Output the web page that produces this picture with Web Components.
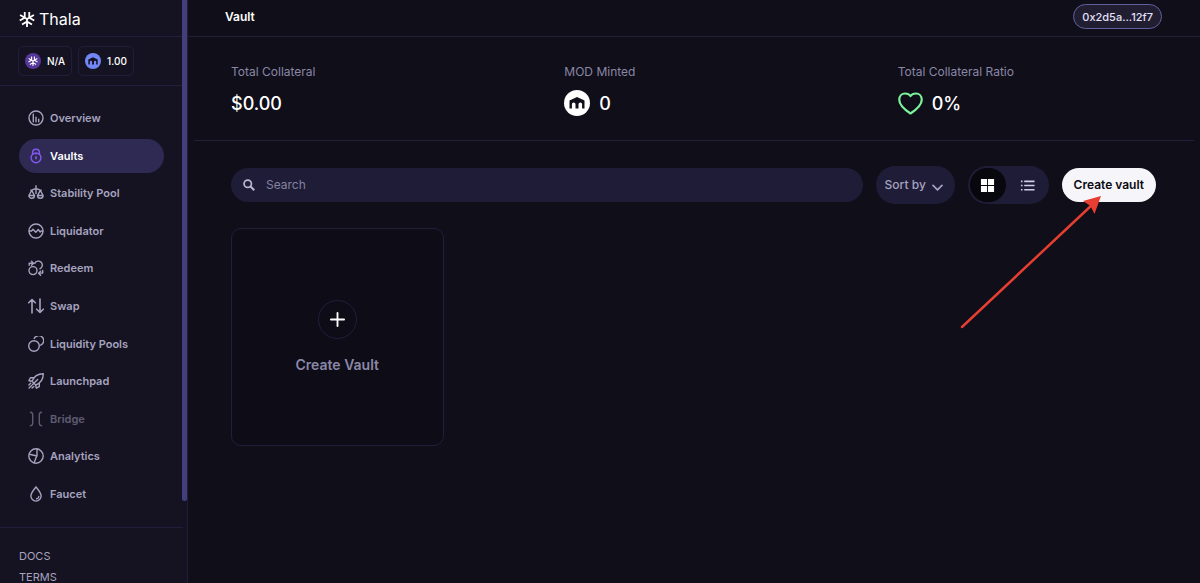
<!DOCTYPE html>
<html lang="en">
<head>
<meta charset="utf-8">
<meta name="viewport" content="width=device-width, initial-scale=1">
<title>Thala – Vault</title>
<style>
  :root {
    --bg: #0f0e19;
    --side: #151322;
    --line: #211e3c;
    --field: #1f1c38;
    --pill: #2e2a54;
    --thumb: #433f7a;
    --muted: #a6a3bf;
    --dim: #8a87a6;
  }
  body {
    margin: 0;
    background: var(--bg);
    color: #fff;
    font: 12px/16px Inter, "Liberation Sans", sans-serif;
  }
</style>
</head>
<body>
<th-app></th-app>

<script>
const FLAKE_ARM = '<path d="M8 8v8M8 10.600l-5 2.900M8 10.600l5 2.900"/>';
const ICONS = {
  logo: `<g stroke-width="1.800" stroke-linecap="butt">${FLAKE_ARM}<g transform="rotate(120 8 8)">${FLAKE_ARM}</g><g transform="rotate(240 8 8)">${FLAKE_ARM}</g></g>`,
  mod: '<path d="M.5 13.500V5.600L8 2l7.500 3.600v7.900h-2.400V9.300A1.800 1.800 0 0 0 11.300 7.500 1.800 1.800 0 0 0 9.500 9.300v4.200h-3V9.300A1.800 1.800 0 0 0 4.700 7.500 1.800 1.800 0 0 0 2.900 9.300v4.200z" fill="currentColor" stroke="none"/>',
  overview: '<circle cx="8" cy="8" r="7"/><path d="M5.300 4.300v7.500M8 7.300v4.500M10.700 9.300v2.500"/>',
  vaults: '<circle cx="8" cy="9.800" r="4.900"/><path d="M4.600 6.300V4.600a3.400 3.400 0 0 1 6.800 0v1.700M5.800 5.600h4.400"/><path d="M8 8.900v1.900" stroke-width="1.600"/>',
  stability: '<path d="M8 .8v3M2.800 5.300C4.500 5.300 5.500 3.800 8 3.800s3.500 1.500 5.200 1.500M3.700 5.300L.9 10.500h5.600zM12.300 5.300L9.500 10.500h5.600zM.9 10.500a2.800 2.800 0 0 0 5.600 0M9.500 10.500a2.800 2.800 0 0 0 5.600 0M8 4v4.500"/>',
  liquidator: '<circle cx="8" cy="8" r="7"/><path d="M1.200 8h2.300l1.500-1.800 2.800 3 1.200-1.200 1.200-1.500 2 2.500 1-1h1.600"/>',
  redeem: '<circle cx="5" cy="10.600" r="4"/><path d="M6.700 3.400a4 4 0 1 1 5.200 5.400M1.200 5.300V3.200h4M3.500 1.200l2 2-2 2M14.700 10.500v2.600h-3.700M12.600 11.200l-2 2 2 2"/>',
  swap: '<path d="M4 15V1.600M.7 4.800L4 1.500l3.300 3.300M12 1v13.400M8.700 11.200l3.300 3.300 3.300-3.300" stroke-width="1.600"/>',
  pools: '<circle cx="6" cy="10" r="5.300"/><path d="M6.200 2.400a5 5 0 1 1 6.500 6.800"/>',
  launchpad: '<path d="M4 8.300C5.800 3.700 9.800.8 15.300.8c0 5.400-2.800 9.400-7.600 11.200zM6.500 4.600L2.400 4.700.9 7.700l3 .6M11.400 9.500l-.1 4.100-3 1.600-.6-3.200M4.600 11.400L9.600 6.400M2.600 10.200L.9 11.900M5.800 13.400l-1.700 1.700M3.600 12.400l-2.500 2.500"/>',
  bridge: '<path d="M2.500 1.300C4.200 1.500 4.700 2.500 4.700 4v8c0 1.500-.5 2.500-2.200 2.700M13.500 1.300C11.800 1.500 11.300 2.500 11.300 4v8c0 1.500.5 2.500 2.200 2.700"/>',
  analytics: '<circle cx="8" cy="8" r="7.200"/><path d="M9 .9v6.400L6 14.900M9 8L1.500 6.200"/>',
  faucet: '<path d="M8 .9C6 3.800 2.900 6.700 2.900 10a5.100 5.100 0 0 0 10.200 0C13.100 6.700 10 3.800 8 .9z"/><path d="M8.600 12.800a2.700 2.700 0 0 0 2.200-2.300"/>',
  search: '<circle cx="6.300" cy="6.300" r="4.900" stroke-width="2.300"/><path d="M9.800 9.800l5.200 5.200" stroke-width="2.800" stroke-linecap="butt"/>',
  chevron: '<path d="M1.500 5l6.500 6.500L14.500 5" stroke-width="2.400"/>',
  grid: '<path d="M1 1h6.500v6.500H1zM8.500 1H15v6.500H8.500zM1 8.500h6.500V15H1zM8.500 8.500H15V15H8.500z" fill="currentColor" stroke="none"/>',
  list: '<path d="M1 3.500h1.700M1 8h1.700M1 12.500h1.700M4.500 3.500H15.500M4.500 8H15.500M4.500 12.500H15.500" stroke-width="1.800" stroke-linecap="butt"/>',
  plus: '<path d="M8 1v14M1 8h14" stroke-width="2"/>',
  heart: '<path d="M8 14.400C4.500 12.100.8 9.300.8 5.600.8 3.200 2.500 1.600 4.500 1.600 6 1.600 7.300 2.100 8 3.200 8.700 2.100 10 1.600 11.500 1.600c2 0 3.700 1.600 3.700 4 0 3.700-3.700 6.500-7.200 8.800z" stroke-width="1.400"/>'
};

function define(name, html, setup) {
  const template = document.createElement('template');
  template.innerHTML = html;
  customElements.define(name, class extends HTMLElement {
    constructor() {
      super();
      this.attachShadow({ mode: 'open' }).append(template.content.cloneNode(true));
    }
    connectedCallback() {
      if (setup) setup(this, this.shadowRoot);
    }
  });
}

define('th-icon', `
  <style>
    :host { display: block; flex: none; width: 16px; height: 16px; }
    svg { display: block; width: 100%; height: 100%; }
  </style>
  <svg viewBox="0 0 16 16" fill="none" stroke="currentColor" stroke-width="1.400" stroke-linecap="round" stroke-linejoin="round" aria-hidden="true"></svg>
`, (host, root) => { root.querySelector('svg').innerHTML = ICONS[host.getAttribute('name')]; });

define('th-price', `
  <style>
    :host {
      display: flex; align-items: center; gap: 6px; box-sizing: border-box;
      height: 30px; padding: 0 6px; border: 1px solid var(--line); border-radius: 5px;
      font-size: 10px; font-weight: 500;
    }
    .coin { display: grid; place-items: center; width: 16px; height: 16px; border-radius: 50%; background: var(--coin); color: var(--glyph, #fff); }
    th-icon { width: 10px; height: 10px; }
  </style>
  <span class="coin"></span><slot></slot>
`, (host, root) => { root.querySelector('.coin').innerHTML = `<th-icon name="${host.getAttribute('icon')}"></th-icon>`; });

define('th-nav-item', `
  <style>
    :host { display: block; }
    a {
      display: flex; align-items: center; gap: 6px; height: 34px; padding: 0 9px;
      border-radius: 17px; color: var(--muted); font-size: 11px; font-weight: 600; text-decoration: none;
    }
    :host([active]) a { background: var(--pill); color: #fff; }
    :host([active]) .icon { color: #8358ee; }
    :host([disabled]) a { opacity: .5; }
  </style>
  <a href="#"><span class="icon"></span><slot></slot></a>
`, (host, root) => { root.querySelector('.icon').innerHTML = `<th-icon name="${host.getAttribute('icon')}"></th-icon>`; });

define('th-sidebar', `
  <style>
    :host { display: block; position: relative; overflow: hidden; box-sizing: border-box; height: 100vh; padding-right: 4px; background: var(--side); border-right: 1px solid var(--line); }
    .brand { display: flex; align-items: center; gap: 4px; box-sizing: border-box; height: 37px; padding: 2px 19px 0; border-bottom: 1px solid var(--line); color: #fff; text-decoration: none; font-size: 16px; line-height: 20px; }
    .prices { display: flex; gap: 6px; padding: 9px 18px; border-bottom: 1px solid var(--line); }
    nav { padding: 15px 19px 16px; border-bottom: 1px solid var(--line); }
    .items { display: flex; flex-direction: column; justify-content: space-between; height: 410px; }
    .links { display: flex; flex-direction: column; gap: 9px; padding: 22px 19px; }
    .links a { color: var(--muted); font-size: 11px; line-height: 12px; text-decoration: none; }
    .thumb { position: absolute; top: 0; right: 0; width: 5px; height: 86%; background: var(--thumb); border-radius: 0 0 3px 3px; }
  </style>
  <a class="brand" href="#"><th-icon name="logo"></th-icon>Thala</a>
  <div class="prices">
    <th-price icon="logo" style="--coin:#56389a">N/A</th-price>
    <th-price icon="mod" style="--coin:#7187f5;--glyph:#151322">1.00</th-price>
  </div>
  <nav aria-label="Main"><div class="items">
    <th-nav-item icon="overview">Overview</th-nav-item>
    <th-nav-item icon="vaults" active>Vaults</th-nav-item>
    <th-nav-item icon="stability">Stability Pool</th-nav-item>
    <th-nav-item icon="liquidator">Liquidator</th-nav-item>
    <th-nav-item icon="redeem">Redeem</th-nav-item>
    <th-nav-item icon="swap">Swap</th-nav-item>
    <th-nav-item icon="pools">Liquidity Pools</th-nav-item>
    <th-nav-item icon="launchpad">Launchpad</th-nav-item>
    <th-nav-item icon="bridge" disabled>Bridge</th-nav-item>
    <th-nav-item icon="analytics">Analytics</th-nav-item>
    <th-nav-item icon="faucet">Faucet</th-nav-item>
  </div></nav>
  <div class="links"><a href="#">DOCS</a><a href="#">TERMS</a></div>
  <div class="thumb"></div>
`);

define('th-header', `
  <style>
    :host { display: flex; align-items: center; justify-content: space-between; box-sizing: border-box; height: 37px; padding: 0 38px 3px 37px; border-bottom: 1px solid var(--line); }
    h1 { margin: 0; font-size: 12px; font-weight: 600; }
    button { height: 25px; padding: 0 8px; border: 1px solid #5f60a0; border-radius: 13px; background: #201e30; color: #e4e0fc; font: 500 11px/16px Inter, sans-serif; }
  </style>
  <h1>Vault</h1>
  <button type="button">0x2d5a...12f7</button>
`);

define('th-stat', `
  <style>
    :host { display: block; padding: 27px 0 24px 37px; }
    .label { color: var(--dim); font-size: 12px; line-height: 16px; }
    .value { display: flex; align-items: center; gap: 9px; height: 26px; margin-top: 10px; font-size: 18px; line-height: 26px; font-weight: 500; }
    .value span { padding-top: 2px; }
  </style>
  <div class="label"><slot name="label"></slot></div>
  <div class="value"><slot name="icon"></slot><span><slot></slot></span></div>
`);

define('th-stats', `
  <style>
    :host { display: grid; grid-template-columns: repeat(3, 1fr); margin: 0 6px; border-bottom: 1px solid var(--line); }
    .coin { display: grid; place-items: center; width: 26px; height: 26px; border-radius: 50%; background: #fff; color: #0f0e19; }
    .heart { width: 25px; height: 25px; color: #7bf29b; }
  </style>
  <th-stat><span slot="label">Total Collateral</span>$0.00</th-stat>
  <th-stat><span slot="label">MOD Minted</span><span slot="icon" class="coin"><th-icon name="mod"></th-icon></span>0</th-stat>
  <th-stat><span slot="label">Total Collateral Ratio</span><th-icon slot="icon" class="heart" name="heart"></th-icon>0%</th-stat>
`);

define('th-toolbar', `
  <style>
    :host { display: flex; align-items: center; gap: 13px; }
    .search { display: flex; align-items: center; flex: 1; gap: 11px; height: 34px; padding: 0 12px; border-radius: 17px; background: var(--field); color: #b9b7cf; }
    .search th-icon { width: 12px; height: 12px; }
    input { flex: 1; min-width: 0; padding: 0; border: 0; outline: 0; background: none; color: #fff; font: 12px/16px Inter, sans-serif; }
    input::placeholder { color: #85829f; opacity: 1; }
    .sort { display: grid; align-items: center; border-radius: 19px; background: var(--field); color: var(--muted); }
    .sort > * { grid-area: 1 / 1; }
    .sort th-icon { justify-self: end; width: 11px; height: 11px; margin: 4px 12px 0 0; pointer-events: none; }
    select { appearance: none; width: 79px; height: 38px; padding: 0 26px 0 9px; border: 0; background: none; color: inherit; font: 500 12px/16px Inter, sans-serif; }
    .views { display: flex; align-items: center; gap: 4px; box-sizing: border-box; width: 81px; height: 38px; padding: 0 2px; border-radius: 19px; background: var(--field); }
    .views button { display: grid; place-items: center; width: 36px; height: 34px; padding: 0; border: 0; border-radius: 18px; background: none; color: #d0cde6; }
    .views .on { background: #08070d; color: #fff; }
    .views th-icon { width: 15px; height: 15px; }
    .create { height: 34px; padding: 0 12px; border: 0; border-radius: 17px; background: #f6f5fa; color: #0a0a12; font: 600 12px/16px Inter, sans-serif; }
  </style>
  <label class="search"><th-icon name="search"></th-icon><input type="text" placeholder="Search" aria-label="Search"></label>
  <div class="sort"><select aria-label="Sort by"><option>Sort by</option></select><th-icon name="chevron"></th-icon></div>
  <div class="views">
    <button type="button" class="on" aria-label="Grid view"><th-icon name="grid"></th-icon></button>
    <button type="button" aria-label="List view"><th-icon name="list"></th-icon></button>
  </div>
  <button type="button" class="create">Create vault</button>
`);

define('th-vault-grid', `
  <style>
    :host { display: grid; grid-template-columns: repeat(4, 1fr); gap: 25px; }
    button { display: flex; flex-direction: column; align-items: center; justify-content: center; gap: 16px; height: 218px; padding: 0; border: 1px solid var(--line); border-radius: 10px; background: #0d0c17; color: var(--dim); font: 600 14px/20px Inter, sans-serif; }
    .add { display: grid; place-items: center; box-sizing: border-box; width: 39px; height: 39px; border: 1px solid var(--line); border-radius: 50%; color: #fff; }
    .add th-icon { width: 15px; height: 15px; }
  </style>
  <button type="button"><span class="add"><th-icon name="plus"></th-icon></span>Create Vault</button>
`);

define('th-pointer', `
  <style>
    :host { display: block; width: 142px; height: 134px; pointer-events: none; }
    svg { display: block; }
  </style>
  <svg width="142" height="134" viewBox="0 0 142 134" aria-hidden="true">
    <path d="M2 132L133 9" stroke="#e63e30" stroke-width="2.500" stroke-linecap="round"/>
    <path d="M141 1L123 6l7.500 5L134.500 19z" fill="#e63e30"/>
  </svg>
`);

define('th-app', `
  <style>
    :host { display: grid; grid-template-columns: 188px minmax(0, 1fr); min-height: 100vh; }
    main { min-width: 0; }
    section { position: relative; display: flex; flex-direction: column; gap: 24px; padding: 25px 44px 25px 43px; }
    th-pointer { position: absolute; top: 54px; right: 98px; }
  </style>
  <th-sidebar></th-sidebar>
  <main>
    <th-header></th-header>
    <th-stats></th-stats>
    <section>
      <th-toolbar></th-toolbar>
      <th-vault-grid></th-vault-grid>
      <th-pointer></th-pointer>
    </section>
  </main>
`);
</script>
</body>
</html>
